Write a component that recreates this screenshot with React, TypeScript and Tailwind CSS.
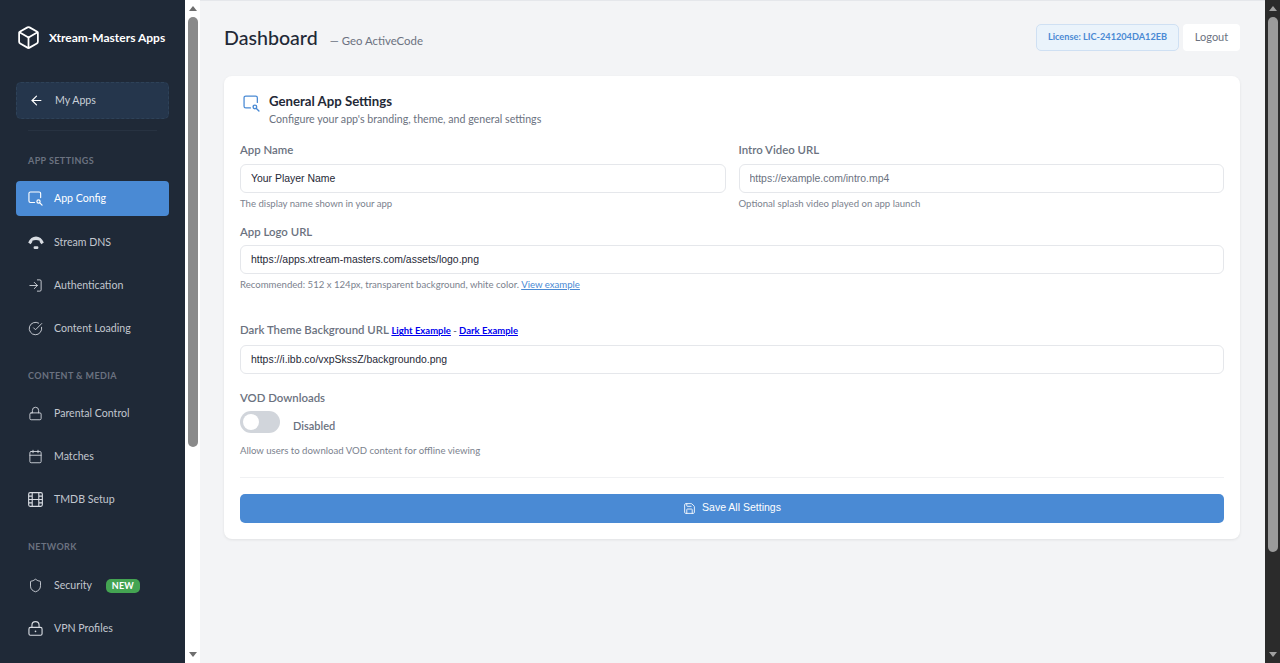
import { ArrowLeft, Box, Calendar, CircleCheckBig, LogIn, Lock, Save, Shield } from "lucide-react";
import type { ReactNode } from "react";

const uiFont = "font-['Lato','Noto_Sans',sans-serif]";

function ConfigIcon({ className }: { className: string }) {
  return (
    <svg viewBox="0 0 16 16" fill="none" stroke="currentColor" strokeWidth="1.2" strokeLinecap="round" className={className}>
      <path d="M7 12.2H2.6A1.6 1.6 0 0 1 1 10.6V2.6A1.6 1.6 0 0 1 2.6 1h9.3a1.6 1.6 0 0 1 1.6 1.6V7" />
      <circle cx="11.2" cy="11.2" r="1.7" strokeWidth="1.3" />
      <path d="M12.6 12.6 15 15" strokeWidth="1.3" />
    </svg>
  );
}

function DnsIcon() {
  return (
    <svg viewBox="0 0 16 14" className="w-4 h-[14px] text-[#d8dce2]" fill="currentColor">
      <path d="M0.2 6.6C1.8 2.6 4.7 0.6 8 0.6s6.2 2 7.8 6L13.4 8.2 11.7 6.1V4.8C10.6 4.2 9.3 3.9 8 3.9s-2.6.3-3.7.9v1.3L2.6 8.2z" />
      <rect x="5.6" y="10.2" width="4.8" height="2.8" rx="1.2" />
    </svg>
  );
}

function FilmIcon() {
  return (
    <svg viewBox="0 0 16 16" fill="none" stroke="currentColor" strokeWidth="1.2" className="w-[15px] h-[15px] text-[#d8dce2]">
      <rect x="0.7" y="0.7" width="14.6" height="14.6" rx="1.6" />
      <path d="M4.5 0.7v14.6M11.5 0.7v14.6M0.7 4.4h3.8M0.7 8h14.6M0.7 11.6h3.8M11.5 4.4h3.8M11.5 11.6h3.8" />
    </svg>
  );
}

function VpnIcon() {
  return (
    <svg viewBox="0 0 16 16" fill="none" stroke="currentColor" strokeWidth="1.2" className="w-[15px] h-[15px] text-[#d8dce2]">
      <rect x="1" y="6.8" width="14" height="8.4" rx="1.6" />
      <path d="M4.2 6.8V4.4a3.8 3.8 0 0 1 7.6 0v2.4" />
      <circle cx="8" cy="11" r="0.9" fill="currentColor" stroke="none" />
    </svg>
  );
}

function NavItem({ icon, label, active, badge }: { icon: ReactNode; label: string; active?: boolean; badge?: string }) {
  return (
    <div className={`mx-4 h-[35px] rounded-[4px] pl-3 flex items-center ${active ? "mb-[9px] bg-[#4a8ad4] text-white" : "mb-2 text-[#c2c7cf]"}`}>
      <span className="w-[26px] flex items-center">{icon}</span>
      <span className="text-[10.6px]">{label}</span>
      {badge ? (
        <span className="ml-[14px] h-[14px] w-[34px] rounded-[5px] bg-[#44a452] text-white text-[9px] font-bold flex items-center justify-center tracking-[0.2px]">
          {badge}
        </span>
      ) : null}
    </div>
  );
}

function SectionLabel({ children, className }: { children: ReactNode; className: string }) {
  return <div className={`pl-7 text-[9px] font-bold tracking-[0.4px] text-[#6b7280] leading-[12px] ${className}`}>{children}</div>;
}

function Field({ label, value, placeholder }: { label: ReactNode; value?: string; placeholder?: string }) {
  return (
    <div className="flex flex-col">
      <div className="text-[11.4px] font-semibold text-[#6b7280] leading-[15px] mb-[6.5px]">{label}</div>
      <input
        readOnly
        value={value ?? ""}
        placeholder={placeholder}
        className="h-[29px] w-full rounded-[6px] border border-[#e5e7eb] bg-white px-[10px] text-[10.45px] text-[#1f2937] placeholder:text-[#6b7280] font-['Liberation_Sans',sans-serif] outline-none"
      />
    </div>
  );
}

function Hint({ children, className = "" }: { children: ReactNode; className?: string }) {
  return <div className={`text-[9.6px] text-[#7b828e] leading-[12px] ${className}`}>{children}</div>;
}

function ScrollBar({ track, up, down, thumb, thumbHeight }: { track: string; up: string; down: string; thumb: string; thumbHeight: string }) {
  return (
    <div className={`w-[15px] shrink-0 h-full flex flex-col items-center ${track}`}>
      <div className="h-[17px] flex items-center justify-center shrink-0">
        <div className={`w-0 h-0 border-x-[4.5px] border-x-transparent border-b-[5px] ${up}`} />
      </div>
      <div className={`w-[10px] rounded-full ${thumb} ${thumbHeight}`} />
      <div className="flex-1" />
      <div className="h-[17px] flex items-center justify-center shrink-0">
        <div className={`w-0 h-0 border-x-[4.5px] border-x-transparent border-t-[5px] ${down}`} />
      </div>
    </div>
  );
}

export default function App() {
  const ic = "w-[15px] h-[15px] text-[#d8dce2]";
  return (
    <div className={`h-screen w-full flex overflow-hidden bg-[#f3f4f6] ${uiFont}`}>
      <aside className="w-[185px] shrink-0 h-full bg-[#1f2937] overflow-hidden">
        <div className="flex pl-4 pt-[25px] h-[82px] items-start">
          <Box className="w-[25px] h-[25px] text-white" strokeWidth={1.7} />
          <span className="ml-2 text-[12px] font-bold text-white leading-[26px]">Xtream-Masters Apps</span>
        </div>
        <div className="mx-4 h-[37px] rounded-[5px] border border-dashed border-[#2e4258] bg-[#25364c] pl-3 flex items-center text-[#c9d0d8]">
          <span className="w-[26px] flex items-center"><ArrowLeft className="w-[15px] h-[15px] text-white" strokeWidth={1.9} /></span>
          <span className="text-[10.6px]">My Apps</span>
        </div>
        <div className="mx-7 mt-[11px] border-t border-[#273241]" />
        <SectionLabel className="mt-6 mb-[14px]">APP SETTINGS</SectionLabel>
        <NavItem active label="App Config" icon={<ConfigIcon className="w-[15px] h-[15px] text-white" />} />
        <NavItem label="Stream DNS" icon={<DnsIcon />} />
        <NavItem label="Authentication" icon={<LogIn className={ic} strokeWidth={1.4} />} />
        <NavItem label="Content Loading" icon={<CircleCheckBig className={ic} strokeWidth={1.4} />} />
        <SectionLabel className="mt-6 mb-[14px]">CONTENT &amp; MEDIA</SectionLabel>
        <NavItem label="Parental Control" icon={<Lock className={ic} strokeWidth={1.4} />} />
        <NavItem label="Matches" icon={<Calendar className={ic} strokeWidth={1.4} />} />
        <NavItem label="TMDB Setup" icon={<FilmIcon />} />
        <SectionLabel className="mt-6 mb-[15px]">NETWORK</SectionLabel>
        <NavItem label="Security" badge="NEW" icon={<Shield className={ic} strokeWidth={1.4} />} />
        <NavItem label="VPN Profiles" icon={<VpnIcon />} />
      </aside>

      <ScrollBar track="bg-white" up="border-b-[#6e6e6e]" down="border-t-[#6e6e6e]" thumb="bg-[#8a8a8a]" thumbHeight="h-[430px]" />

      <main className="flex-1 min-w-0 h-full overflow-hidden border-t border-[#e5e7eb] pl-6 pr-[25px] pt-[22px]">
        <header className="flex items-center justify-between h-[28px]">
          <div className="flex items-baseline mt-[2px]">
            <h1 className="text-[19.6px] font-medium text-[#1f2937]">Dashboard</h1>
            <span className="ml-3 text-[11.4px] text-[#6b7280]">— Geo ActiveCode</span>
          </div>
          <div className="flex items-center gap-1">
            <div className="h-[27px] w-[143px] justify-center rounded-[5px] border border-[#cfe0f3] bg-[#eaf3fb] text-[#4a8ad4] text-[9.2px] font-bold flex items-center">License: LIC-241204DA12EB</div>
            <div className="h-[27px] w-[57px] justify-center rounded-[4px] bg-white text-[#6b7280] text-[11px] flex items-center">Logout</div>
          </div>
        </header>

        <section className="mt-[25px] rounded-[8px] bg-white shadow-[0_1px_3px_rgba(0,0,0,0.08)] px-4 pt-[16px] pb-[16px]">
          <div className="flex items-start">
            <ConfigIcon className="w-[17px] h-[17px] text-[#4a8ad4] ml-[3px] mt-[3px]" />
            <div className="ml-[9px]">
              <div className="text-[13.2px] font-bold text-[#1f2937] leading-[18px]">General App Settings</div>
              <div className="text-[10.65px] text-[#6b7280] leading-[18px]">Configure your app's branding, theme, and general settings</div>
            </div>
          </div>

          <div className="grid grid-cols-2 gap-x-[13px] mt-[14px]">
            <div>
              <Field label="App Name" value="Your Player Name" />
              <Hint className="mt-[5px]">The display name shown in your app</Hint>
            </div>
            <div>
              <Field label="Intro Video URL" placeholder="https://example.com/intro.mp4" />
              <Hint className="mt-[5px]">Optional splash video played on app launch</Hint>
            </div>
          </div>

          <div className="mt-[14px]">
            <Field label="App Logo URL" value="https://apps.xtream-masters.com/assets/logo.png" />
            <Hint className="mt-[5px]">
              Recommended: 512 x 124px, transparent background, white color. <span className="underline text-[#4a8ad4]">View example</span>
            </Hint>
          </div>

          <div className="mt-[31px]">
            <Field
              label={
                <>
                  Dark Theme Background URL{" "}
                  <span className="text-[9.5px] font-bold underline text-[#0000ee]">Light Example</span>
                  <span className="text-[9.5px] font-bold"> - </span>
                  <span className="text-[9.5px] font-bold underline text-[#0000ee]">Dark Example</span>
                </>
              }
              value="https://i.ibb.co/vxpSkssZ/backgroundo.png"
            />
          </div>

          <div className="mt-[16px] text-[11.4px] font-semibold text-[#6b7280] leading-[15px]">VOD Downloads</div>
          <div className="mt-[6px] flex items-start">
            <div className="w-10 h-[22px] rounded-full bg-[#d1d5db] pl-[3px] flex items-center">
              <div className="w-4 h-4 rounded-full bg-white" />
            </div>
            <span className="ml-[13px] mt-[7px] text-[11px] font-semibold text-[#6b7280] leading-[15px]">Disabled</span>
          </div>
          <Hint className="mt-[12.5px]">Allow users to download VOD content for offline viewing</Hint>

          <div className="mt-[19.5px] border-t border-[#f0f1f3]" />
          <div className="mt-4 h-[29px] rounded-[5px] bg-[#4a8ad4] text-white flex items-center justify-center gap-[6px] font-['Liberation_Sans',sans-serif] text-[10.5px]">
            <Save className="w-[13px] h-[13px]" strokeWidth={1.6} />
            <span>Save All Settings</span>
          </div>
        </section>
      </main>

      <ScrollBar track="bg-[#2b2b2b]" up="border-b-[#a0a0a0]" down="border-t-[#a0a0a0]" thumb="bg-[#9b9b9b]" thumbHeight="h-[535px]" />
    </div>
  );
}
